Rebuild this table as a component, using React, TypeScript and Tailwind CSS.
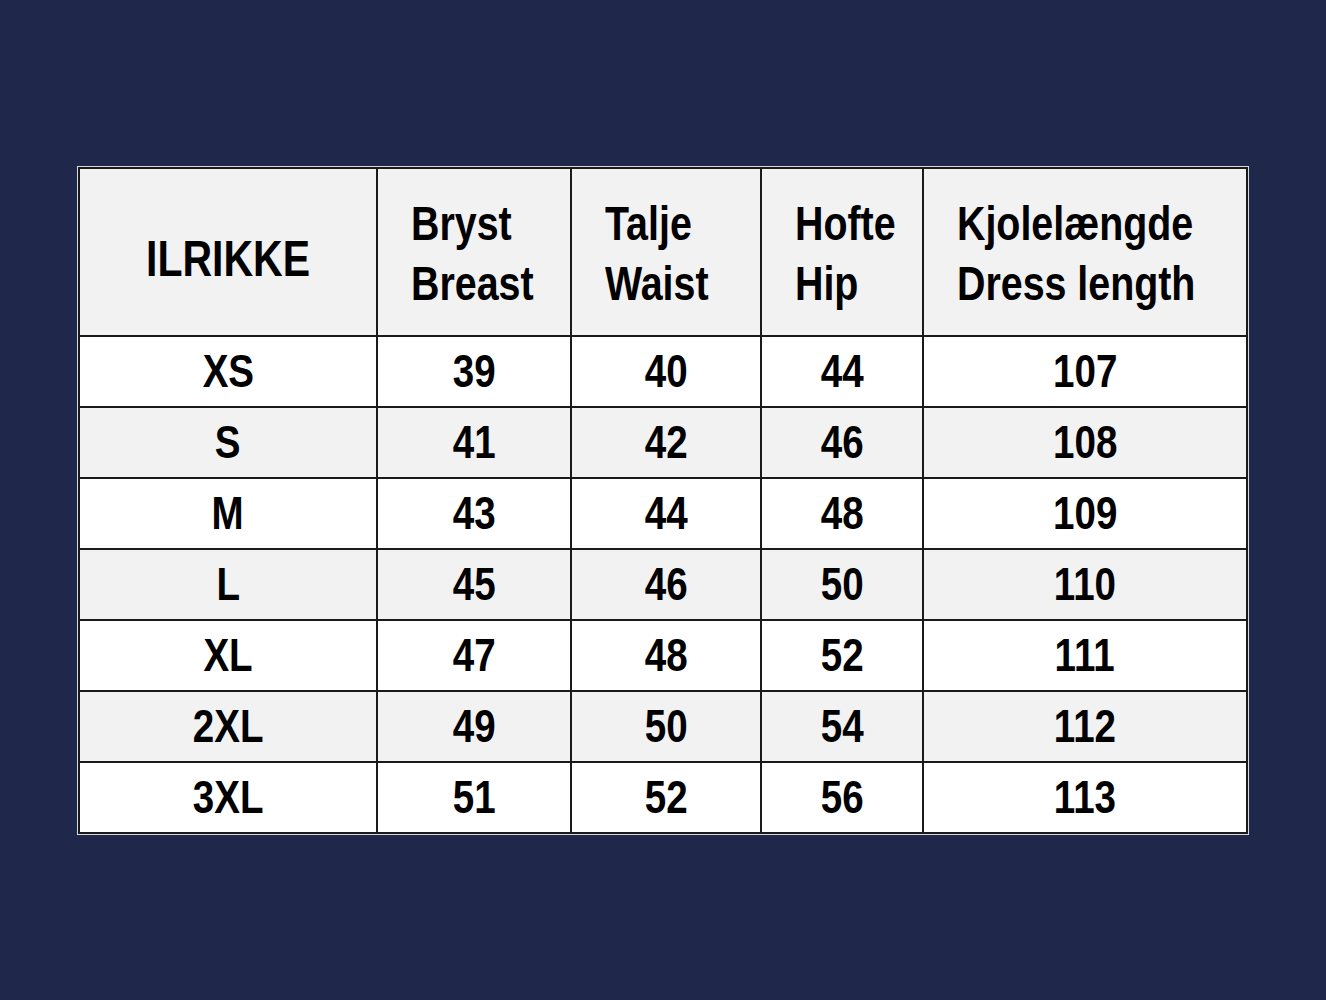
import React from "react";

type Row = { size: string; bust: number; waist: number; hip: number; length: number };

const rows: Row[] = [
  { size: "XS", bust: 39, waist: 40, hip: 44, length: 107 },
  { size: "S", bust: 41, waist: 42, hip: 46, length: 108 },
  { size: "M", bust: 43, waist: 44, hip: 48, length: 109 },
  { size: "L", bust: 45, waist: 46, hip: 50, length: 110 },
  { size: "XL", bust: 47, waist: 48, hip: 52, length: 111 },
  { size: "2XL", bust: 49, waist: 50, hip: 54, length: 112 },
  { size: "3XL", bust: 51, waist: 52, hip: 56, length: 113 },
];

const headers = [
  { top: "Bryst", bottom: "Breast" },
  { top: "Talje", bottom: "Waist" },
  { top: "Hofte", bottom: "Hip" },
  { top: "Kjolelængde", bottom: "Dress length" },
];

const cell = "border-r-2 border-b-2 border-[#1a1a1a] flex items-center justify-center";

// narrow look: Liberation Sans squeezed horizontally
const Narrow = ({ children, left }: { children: React.ReactNode; left?: boolean }) => (
  <span
    className={`inline-block whitespace-nowrap scale-x-[0.82] ${left ? "origin-left" : "origin-center"}`}
  >
    {children}
  </span>
);

const App = () => {
  return (
    <div
      className="min-h-screen w-full bg-[#1f274b] flex items-center justify-center"
      style={{ fontFamily: '"Liberation Sans", Arial, sans-serif' }}
    >
      <div className="border border-[#d9d9d9]">
        <div className="grid grid-cols-[298px_194px_190px_162px_324px] border-l-2 border-t-2 border-[#1a1a1a] font-bold text-black">
          {/* header */}
          <div className={`${cell} h-[168px] bg-[#f2f2f2] text-[50px] pt-4`}>
            <Narrow>ILRIKKE</Narrow>
          </div>
          {headers.map((h) => (
            <div
              key={h.top}
              className="h-[168px] bg-[#f2f2f2] border-r-2 border-b-2 border-[#1a1a1a] flex flex-col justify-center items-start pl-[33px] text-[48px] leading-[60px] pt-1 overflow-hidden"
            >
              <Narrow left>{h.top}</Narrow>
              <Narrow left>{h.bottom}</Narrow>
            </div>
          ))}
          {rows.map((r, i) => {
            const bg = i % 2 === 0 ? "bg-white" : "bg-[#f2f2f2]";
            return (
              <React.Fragment key={r.size}>
                <div className={`${cell} ${bg} h-[71px] text-[47px]`}>
                  <Narrow>{r.size}</Narrow>
                </div>
                <div className={`${cell} ${bg} h-[71px] text-[47px]`}>
                  <Narrow>{r.bust}</Narrow>
                </div>
                <div className={`${cell} ${bg} h-[71px] text-[47px]`}>
                  <Narrow>{r.waist}</Narrow>
                </div>
                <div className={`${cell} ${bg} h-[71px] text-[47px]`}>
                  <Narrow>{r.hip}</Narrow>
                </div>
                <div className={`${cell} ${bg} h-[71px] text-[47px]`}>
                  <Narrow>{r.length}</Narrow>
                </div>
              </React.Fragment>
            );
          })}
        </div>
      </div>
    </div>
  );
};

export default App;
